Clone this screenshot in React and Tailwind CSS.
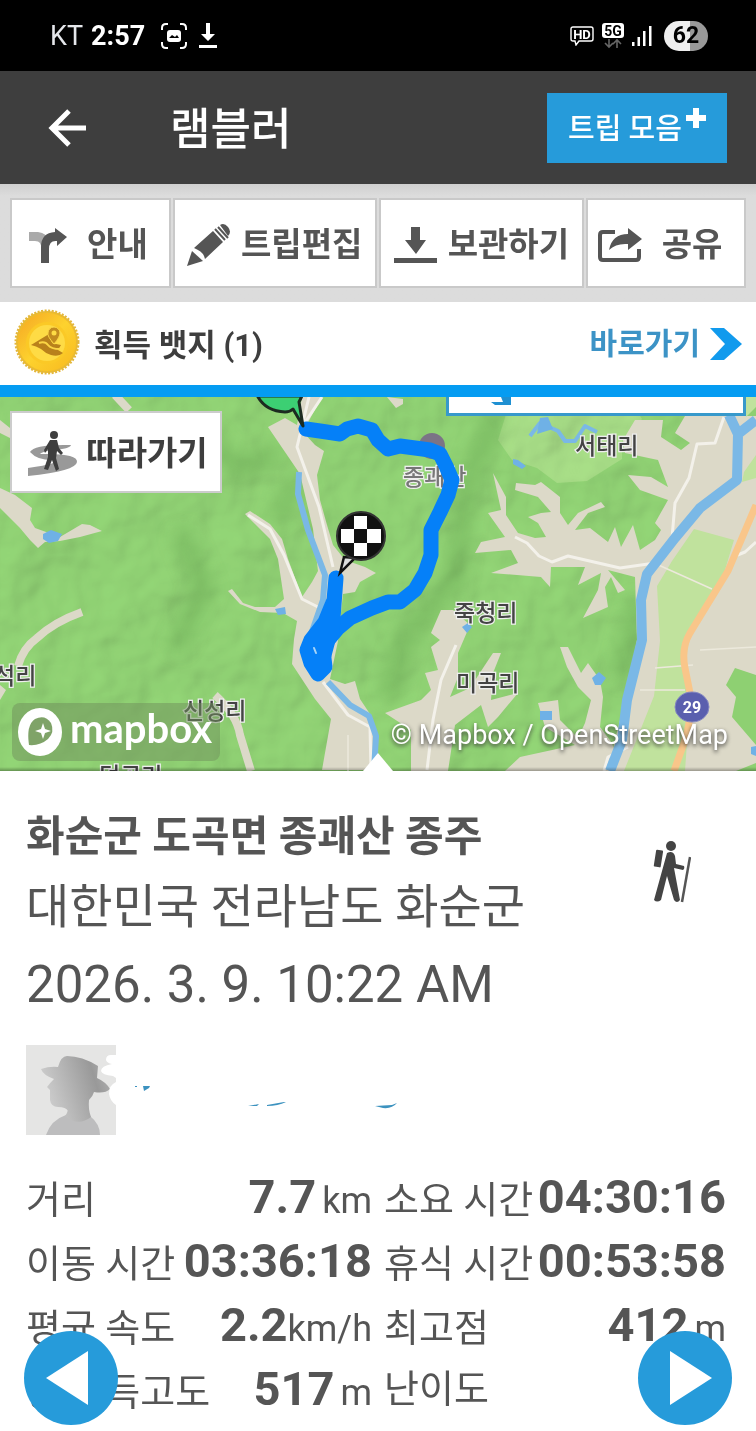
const actions = [
  { label: '안내', Icon: TurnIcon, gap: 'gap-5 pr-1' },
  { label: '트립편집', Icon: PencilIcon, gap: 'gap-2.5' },
  { label: '보관하기', Icon: SaveIcon, gap: 'gap-2.5' },
  { label: '공유', Icon: ShareIcon, gap: 'gap-5 pr-3' },
]

const stats = [
  { label: '거리', value: '7.7', unit: 'km' },
  { label: '소요 시간', value: '04:30:16' },
  { label: '이동 시간', value: '03:36:18' },
  { label: '휴식 시간', value: '00:53:58' },
  { label: '평균 속도', value: '2.2', unit: 'km/h', tight: true },
  { label: '최고점', value: '412', unit: 'm' },
  { label: '총 획득고도', value: '517', unit: 'm' },
  { label: '난이도', unit: '쉬움' },
]

function TurnIcon() {
  return (
    <svg viewBox="0 0 38 36" className="w-[38px] h-9 shrink-0">
      <path d="M0 5h9q9 1 11 9v8h-8q1-8-6-8H0z" fill="#aaa" />
      <path d="M12 36V20q0-14 14-15V1l12 9-10 9v-5q-8-1-8 8v14z" fill="#555" />
    </svg>
  )
}

function PencilIcon() {
  return (
    <svg viewBox="0 0 44 44" className="size-11 shrink-0">
      <path d="M0 43l5-15 11 10z" fill="#555" />
      <path d="M7 25L26 8l10 11-18 17q-1-7-11-11z" fill="#555" />
      <path d="M28 6l10 11M31 4l10 11" stroke="#555" strokeWidth="2" />
      <path d="M33 2q4-3 8 2t0 9z" fill="#555" />
    </svg>
  )
}

function SaveIcon() {
  return (
    <svg viewBox="0 0 44 36" className="w-11 h-9 shrink-0" fill="#555">
      <path d="M17 0h9v13h6L22 27 11 13h6zM0 31h43v5H0z" />
    </svg>
  )
}

function ShareIcon() {
  return (
    <svg viewBox="0 0 44 34" className="w-11 h-[34px] shrink-0">
      <path d="M17 4H5q-3 0-3 3v22q0 3 3 3h33q3 0 3-3v-8" fill="none" stroke="#555" strokeWidth="4" />
      <path d="M30 0l14 11-14 11v-6q-12-1-19 6Q14 6 30 6z" fill="#555" />
    </svg>
  )
}

function StatusBar() {
  return (
    <div className="bg-black text-white h-[71px] pl-[50px] pr-12 flex items-center justify-between">
      <div className="flex items-center gap-2 text-[27px] leading-8">
        <span className="text-gray-200">KT</span>
        <span className="font-bold">2:57</span>
        <svg viewBox="0 0 26 26" className="size-[26px] ml-2" fill="none" stroke="#fff" strokeWidth="2">
          <path d="M1 7V5q0-4 4-4h2M19 1h2q4 0 4 4v2M25 19v2q0 4-4 4h-2M7 25H5q-4 0-4-4v-2" />
          <rect x="6" y="7" width="14" height="12" rx="3" fill="#fff" stroke="none" />
          <path d="M8 15l3-3 3 2 2-2 2 3z" fill="#000" stroke="none" />
        </svg>
        <svg viewBox="0 0 18 26" className="w-[18px] h-[26px] ml-1" fill="#fff">
          <path d="M7 0h4v11h5L9 18l-7-7h5zM0 22h18v3H0z" />
        </svg>
      </div>
      <div className="flex items-center gap-2">
        <svg viewBox="0 0 24 20" className="w-6 h-5">
          <path d="M3 1h18q2 0 2 2v10q0 2-2 2H9l-3 4-1-4H3q-2 0-2-2V3q0-2 2-2z" fill="none" stroke="#fff" strokeWidth="1.4" />
          <text x="12" y="13" textAnchor="middle" fontSize="13" fontWeight="700" fill="#fff">HD</text>
        </svg>
        <svg viewBox="0 0 22 26" className="w-[22px] h-[26px]">
          <rect width="22" height="15" rx="3" fill="#fff" />
          <text x="11" y="12.5" textAnchor="middle" fontSize="14" fontWeight="700">5G</text>
          <path d="M7 16v8M3 20l4 4 4-4M15 25v-8M11 21l4-4 4 4" fill="none" stroke="#666" strokeWidth="1.6" />
        </svg>
        <svg viewBox="0 0 20 22" className="w-5 h-[22px]" fill="#fff">
          <path d="M0 17h2.500v4H0zM5.500 12H8v9H5.500zM11 6h2.500v15H11zM17 1h2.500v20H17z" />
        </svg>
        <span className="ml-1 w-[44px] h-[30px] rounded-full bg-linear-to-r from-[#eee] from-60% to-[#999] to-60% text-black font-bold text-[23px] leading-[30px] text-center">62</span>
      </div>
    </div>
  )
}

function Header() {
  return (
    <header className="h-[113px] bg-[#3e3e3e] text-white pl-12 pr-[29px] flex items-center">
      <button aria-label="뒤로">
        <svg viewBox="0 0 38 38" className="size-[38px]" fill="none" stroke="#fff" strokeWidth="5">
          <path d="M38 19H4M21 2L4 19l17 17" />
        </svg>
      </button>
      <h1 className="ml-[84px] pt-1 text-[44px] leading-[56px] font-medium grow">램블러</h1>
      <button className="h-[70px] w-[180px] pt-1 bg-[#269bda] text-[29px] font-medium flex items-center justify-center gap-1">
        트립 모음
        <svg viewBox="0 0 20 20" className="size-5 mb-6" fill="#fff">
          <path d="M7 0h6v7h7v6h-7v7H7v-7H0V7h7z" />
        </svg>
      </button>
    </header>
  )
}

function Badge() {
  return (
    <svg viewBox="0 0 66 66" className="size-[66px] mb-1 shrink-0">
      <defs>
        <linearGradient id="gold" x1="0" y1="0" x2="1" y2="1">
          <stop offset="0" stopColor="#f5a623" />
          <stop offset=".5" stopColor="#fdd22e" />
          <stop offset="1" stopColor="#f8b91e" />
        </linearGradient>
      </defs>
      <circle cx="33" cy="33" r="31" fill="#eebd2c" stroke="#e3b73c" strokeWidth="3" strokeDasharray="2 1.500" />
      <circle cx="33" cy="33" r="29" fill="url(#gold)" />
      <circle cx="33" cy="34" r="21" fill="#fbc926" />
      <circle cx="33" cy="34" r="18" fill="#fedb45" />
      <path d="M17 36l18-11 2 6q1 5 5 4l5 1-3 5 5 3q-4 4-12 2-6-2-10-6-5-3-10-4z" fill="#b9811b" />
      <path d="M25 34q6-2 9 2t12 4" fill="none" stroke="#fbd545" strokeWidth="2" />
      <path d="M40 35q-7-8-6-11a6 6 0 0 1 12 0q0 4-6 11z" fill="#c38b1f" stroke="#fbd545" />
      <circle cx="40" cy="24" r="2.500" fill="#fedb45" />
    </svg>
  )
}

function Terrain() {
  return (
    <svg viewBox="0 397 756 374" preserveAspectRatio="xMidYMid slice" className="block w-full h-full">
      <defs>
        <filter id="hills" x="0" y="0" width="100%" height="100%">
          <feTurbulence type="fractalNoise" baseFrequency="0.018" numOctaves="3" seed="8" />
          <feDiffuseLighting surfaceScale="9" lightingColor="#ffffff">
            <feDistantLight azimuth="220" elevation="58" />
          </feDiffuseLighting>
        </filter>
        <filter id="soft"><feGaussianBlur stdDeviation="9" /></filter>
      </defs>
      <rect y="397" width="756" height="374" fill="#93d676" />
      <path d="M508 408l20-11h100l14 22-20 20 0 20-35 22-30 2-20-15-25-8-14-20z" fill="#a9e088" />
      <rect y="397" width="756" height="374" filter="url(#hills)" opacity=".38" className="mix-blend-multiply" />
      <g fill="none" stroke="#5d9c4a" strokeWidth="18" opacity=".4" filter="url(#soft)">
        <path d="M497 410l-28 70-15 100-50 60-15 60M200 430l40 40 40-20M180 530l25 60-30 60M300 480l-25 40M640 600l-20 80" />
      </g>

      {/* valleys */}
      <g fill="#dcd9c8">
        <path d="M268 427l17-9 12 7 5-28h20l-10 18-9 17 12 13 9 6-7 24 3 25 7 25 6 20 12 15 20 7 11 6-16 9-5 10-12 2-5 47-8 38 15 5 10-3 5 18 10 15 6 15 2 41h-56l9-51-16-20-23-35 2-25 3-18-14-8-23-1-20-8-12-13 4-2 11 14 12 4h20l9-8-6-40-8-20-25-25 5-3 20 13 12 15 6 20 14 38 10-15 6-11-5-42-13-55z" />
        <path d="M0 488l15 7 17 13-2 12 5 8 25 9 22-13 8 1 12 6-22 6-20 4-15 1-7 6-8-8-10-12-20-20zM0 420l10 8 10 15-20-10zM0 685l6 5-6 10z" />
        <path d="M493 473L506 497V515L518 533L535 538L546 537L538 523L528 517L541 513L551 512L538 497L515 490L516 483L535 485L541 482L560 497V513L568 525L578 513L601 502L605 507L588 513L575 530L590 528L608 542L615 527L621 547L633 525L640 550L655 540L661 530L655 523L668 500L640 490L628 475L651 477L668 487L658 460L625 453L623 440L635 420L663 420L661 437L681 450L690 443L675 433L685 416H756V771H608L615 740L625 700L637 640L635 577L608 570L625 590L618 593L611 577L605 587L608 607L583 618L598 590L601 573L578 585L585 567L551 567L550 587L541 577L491 573L518 563L511 550L475 553L481 542L505 537L488 513L501 510z" />
        <path d="M387 397l16 2 0 5-7 4z" />
        <path d="M441 610H453L470 625L458 653V677L450 697L470 688L485 665L493 653H501L493 673L491 700L518 693L498 717L488 727L481 705L455 725L448 771H411V730L385 713L421 700L431 690L425 673L438 670L431 647L440 640L431 633z" />
        <path d="M560 647H568L581 673L588 663L600 680L603 697L600 727L612 743L620 771H505L520 757L575 745L545 727L538 703L558 700L560 720L578 738L585 723L591 700L578 687L567 667z" />
      </g>
      <path d="M82 612q-28 10-45 26-14 10-19 28M215 695q22 20 25 40l11 36M115 395l14 15" fill="none" stroke="#dcd9c8" strokeWidth="8" />
      <path d="M694 529l40 11-15 50-29 45-6 35 6 30-5 71h-61l30-75 6-55-3-55 15-25z" fill="#c0e29d" />
      <path d="M756 455l-12 17-2 10 14-4zM745 397h11v10l-10 10z" fill="#c0e29d" />
      <path d="M735 668l21 7v70l-24-28 4-20-10-12zM736 771l20-8v8z" fill="#8ed072" />

      {/* roads */}
      <g fill="none" stroke="#f3f1ea" strokeWidth="3" strokeLinejoin="round">
        <path d="M309 397l-12 50 22 60 14 60M322 397l-20 30M248 515l22 14 14 26 18 44 22 11M323 682l25 33 22 12 1 44" />
        <path d="M515 537l12 6 12 13 13 6 16-6 52 12 35-5 17-25 3-35 14-25 8-34 18-1 9-26M456 645l-15 35-8 40-6 50M604 771l4-14 20-10" />
        <path d="M735 556l10-4 11-10" />
      </g>
      <path d="M654 563l58 26M655 668l38-3M700 650l56-3M640 690h45M348 735l0 36" fill="none" stroke="#ece9dc" strokeWidth="1.500" />

      {/* water */}
      <g fill="none" stroke="#7ab8e6" strokeLinejoin="round">
        <path d="M299 472l-1 22 10 36 17 45-2 25-14 40M328 682l22 23 19 11 7 20-2 35" strokeWidth="6" />
        <path d="M729 415l9 19-1 46-37 28-25 30-28 36-6 26 1 40-15 60-5 40-12 31M738 434l18-14" strokeWidth="10" />
        <path d="M530 436l10-13 18 8 7 10 10 0 10-15 12 6" strokeWidth="4" />
      </g>
      <path d="M43 534l8-4 11 4-4 7-9 2-6-4zM592 678l7-6 7 6-5 7h-6zM540 711h12v9h-12zM462 627l6-4 4 4-5 6zM513 459l5 1 8 6-4 3-9-5zM540 418l8-1 5 12-16 5zM275 609l10-2 1 7-8 1zM751 747l5-1v10l-5-2z" fill="#6fb1e6" />
      <path d="M756 505l-28 66-38 62q-9 15-5 35l6 30q0 25-7 45l-10 28" fill="none" stroke="#f9c68a" strokeWidth="7" />
      <ellipse cx="692" cy="707" rx="17" ry="15" fill="#5a5fae" stroke="#8488c2" />
      <text x="692" y="713" textAnchor="middle" fontSize="16" fontWeight="700" fill="#fff">29</text>

      <circle cx="432" cy="446" r="13" fill="#7b7486" />
      <g fontSize="23" fontWeight="500" fill="#444" stroke="#eeeeee" strokeWidth="2.500" paintOrder="stroke">
        <text x="403" y="485" fill="#777">종괘산</text>
        <text x="575" y="454">서태리</text>
        <text x="454" y="621">죽청리</text>
        <text x="456" y="691">미곡리</text>
        <text x="183" y="719">신성리</text>
        <text x="-6" y="684">석리</text>
        <text x="99" y="784">덕곡리</text>
      </g>

      <path d="M306 429L320 431L340 434L347 429L358 426L372 430L378 440L388 449L400 446L430 450L440 454L446 466L452 480L448 495L440 512L431 530L431 555L425 573L415 590L400 602L388 602L372 608L350 618L338 628L328 640L324 655" fill="none" stroke="#0580f8" strokeWidth="15" strokeLinejoin="round" strokeLinecap="round" />
      <path d="M336 578L334 600L325 622L311 640L307 650L311 663L318 674L325 667L323 650L332 632z" fill="#0580f8" stroke="#0580f8" strokeWidth="15" strokeLinejoin="round" />
      <path d="M314 648l2 5" stroke="#a8d4f7" strokeWidth="2" strokeLinecap="round" />

      <path d="M258 397q8 14 27 15 5 0 8-3l10 17-4-24 3-6h-44z" fill="#3ccf73" stroke="#1c2b20" strokeWidth="3" strokeLinejoin="round" />
      <path d="M344 557l-4 16 15-15z" fill="#ddd" stroke="#111" strokeWidth="2.500" />
      <circle cx="361" cy="536" r="24" fill="#111" stroke="#333" strokeWidth="2" />
      <path d="M354 516h13v13h-13zM354 543h13v13h-13zM341 529h13v14h-13zM367 529h14v14h-14z" fill="#fff" />
    </svg>
  )
}

function FollowIcon() {
  return (
    <svg viewBox="0 0 50 46" className="w-[50px] h-[46px]">
      <path d="M2 21q4-8 41-7-1 4-18 5-12 2-13 4 38-1 37 8-1 9-49 14v-8q34-5 27-8-17 1-25-8z" fill="#999" />
      <circle cx="26" cy="4" r="4" fill="#3e3e3e" />
      <path d="M22 9h7l2 8 4 5-2 2-4-4-1 7 3 11-3 2-4-11-4 10-4-1 4-12v-8l-3 4-1-3z" fill="#3e3e3e" />
    </svg>
  )
}

function TripMap() {
  return (
    <section className="relative h-[374px] overflow-hidden">
      <Terrain />
      <button className="absolute left-[10px] top-[14px] w-[212px] h-[82px] pt-1 pl-1 bg-white border-2 border-[#ccc] flex items-center justify-center gap-2 text-[33px] font-bold text-[#3e3e3e]">
        <FollowIcon />
        따라가기
      </button>
      <div className="absolute right-[10px] top-[-10px] w-[300px] h-[29px] bg-white border-[3px] border-[#3799cb]">
        <svg viewBox="0 0 20 8" className="ml-[42px] mt-[7px] w-5 h-2" fill="#1f90d2">
          <path d="M10 0h10v8H4L0 5h12z" />
        </svg>
      </div>
      <div className="absolute left-3 bottom-[10px] w-[208px] h-[58px] rounded-lg bg-[#6f8f5b]/50 text-white flex items-center gap-2 pl-[6px]">
        <svg viewBox="0 0 44 48" className="w-11 h-12">
          <ellipse cx="22" cy="24" rx="22" ry="24" fill="#fff" />
          <path d="M11 37q-3-20 6-26 10-5 16 4 4 9-3 16-8 7-19 6z" fill="#7fa368" />
          <path d="M25 15l2 6 6 2-6 2-2 6-2-6-6-2 6-2z" fill="#fff" />
        </svg>
        <span className="font-['Lato',sans-serif] font-bold text-[40px] leading-[48px] pb-2">mapbox</span>
      </div>
      <a href="#attribution" className="absolute right-7 bottom-[18px] text-[27px] leading-9 text-white text-shadow-[0_2px_4px_#333]">© Mapbox / OpenStreetMap</a>
      <div className="absolute bottom-0 inset-x-0 h-1 bg-linear-to-t from-black/30 to-transparent" />
      <svg viewBox="0 0 30 18" className="absolute bottom-0 left-1/2 -translate-x-1/2 w-[30px] h-[18px]" fill="#fff">
        <path d="M15 0l15 18H0z" />
      </svg>
    </section>
  )
}

function HikerIcon() {
  return (
    <svg viewBox="0 0 38 62" className="w-[38px] h-[62px] shrink-0" fill="#444">
      <circle cx="18" cy="5" r="5" />
      <rect x="2" y="9" width="7" height="17" rx="1" transform="rotate(9 5 17)" />
      <path d="M14 12q6-3 8 3l1 8 8 2q1 3-1 4l-9-2 6 32q-3 4-6 0l-7-24-6 24q-4 3-7 0z" />
      <path d="M37 16l-8 45" stroke="#555" strokeWidth="2.500" />
    </svg>
  )
}

function Author() {
  return (
    <div className="mt-[19px] flex">
      <svg viewBox="0 0 90 90" className="size-[90px]">
        <defs>
          <linearGradient id="hat" x1="0" y1=".3" x2="1" y2="0">
            <stop offset="0" stopColor="#ccc" />
            <stop offset=".7" stopColor="#999" />
            <stop offset="1" stopColor="#b5b5b5" />
          </linearGradient>
        </defs>
        <path d="M0 0h90v90H0z" fill="#e5e5e4" />
        <path d="M20 90q5-15 20-20 12 5 24 1 10 8 10 19z" fill="#bdbdbe" />
        <path d="M42 62Q42 68 39 71Q52 82 65 72Q62 64 63 55Q67 51 68 47Q79 49 84 44Q80 37 71 33L72 21Q56 11 41 11Q35 11 32 22Q24 21 15 24Q17 30 28 34Q24 38 21 42L24 45V55Q25 62 32 62Q40 62 42 66z" fill="url(#hat)" />
        <path d="M90 10h-5q-5 0-5 5 1 3 6 4-11 2-11 7 1 4 12 5l3 2zM90 37q-7 3-7 12 1 7 7 11z" fill="#fff" />
      </svg>
      <svg viewBox="0 0 290 90" className="w-[290px] h-[90px]" fill="#3c92bf">
        <path d="M27 41h7l-1 2-5 3zM19 41h2v1h-2zM132 61l11-2-2 2zM151 60l17-3 2 0q-8 4-19 4zM259 61l17-1 5-2q-5 6-14 5z" />
      </svg>
    </div>
  )
}

function Stat({ label, value, unit, tight }) {
  return (
    <div className="flex items-baseline justify-between whitespace-nowrap">
      <dt className="text-[38px]">{label}</dt>
      <dd className={tight ? 'flex items-baseline' : 'flex items-baseline gap-1.5'}>
        {value && <span className="text-[47px] font-bold">{value}</span>}
        {unit && <span className="text-[36px]">{unit}</span>}
      </dd>
    </div>
  )
}

export default function App() {
  return (
    <div className="min-h-screen bg-white text-[#555] font-['Roboto','Noto_Sans_CJK_KR',sans-serif]">
      <StatusBar />
      <Header />
      <nav className="bg-linear-to-b from-[#cfcfcf] to-[#dcdcdc] to-10% px-[10px] pt-[14px] pb-[14px] grid grid-cols-[161fr_204fr_206fr_160fr] gap-[2px]">
        {actions.map(({ label, Icon, gap }) => (
          <button key={label} className={`h-[90px] pt-1 bg-white border-2 border-[#c9c9c9] flex items-center justify-center whitespace-nowrap text-[33px] font-bold ${gap}`}>
            <Icon />
            {label}
          </button>
        ))}
      </nav>
      <div className="h-[83px] pl-[14px] pr-[14px] flex items-center">
        <Badge />
        <h2 className="ml-[14px] pt-1 grow text-[31px] leading-10 font-bold text-[#3e3e3e]">획득 뱃지 (1)</h2>
        <a href="#badges" className="flex items-center gap-2.5 text-[30px] leading-10 font-bold text-[#3c93c6]">
          바로가기
          <svg viewBox="0 0 32 32" className="size-8" fill="#119aed">
            <path d="M0 0h14l18 16-18 16H0l15-16z" />
          </svg>
        </a>
      </div>
      <div className="h-3 bg-[#059cf2]" />
      <TripMap />
      <main className="px-[26px] pt-[33px]">
        <div className="flex justify-between pr-[39px]">
          <div>
            <h2 className="text-[42px] leading-[66px] font-bold">화순군 도곡면 종괘산 종주</h2>
            <p className="text-[47px] leading-[74px]">대한민국 전라남도 화순군</p>
            <p className="text-[51px] leading-[82px]">2026. 3. 9. 10:22 AM</p>
          </div>
          <div className="pt-[37px]"><HikerIcon /></div>
        </div>
        <Author />
        <dl className="mt-[30px] grid grid-cols-[345fr_341fr] auto-rows-[64px] gap-x-3 pr-1 leading-[64px]">
          {stats.map((s) => <Stat key={s.label} {...s} />)}
        </dl>
      </main>
      <div className="fixed bottom-[6px] inset-x-6 flex justify-between pointer-events-none">
        <button aria-label="이전" className="size-[94px] rounded-full bg-[#269bda] pointer-events-auto">
          <svg viewBox="0 0 94 94"><path d="M64 20v54L22 47z" fill="#fff" /></svg>
        </button>
        <button aria-label="다음" className="size-[94px] rounded-full bg-[#269bda] pointer-events-auto">
          <svg viewBox="0 0 94 94"><path d="M32 20v54l42-27z" fill="#fff" /></svg>
        </button>
      </div>
    </div>
  )
}
